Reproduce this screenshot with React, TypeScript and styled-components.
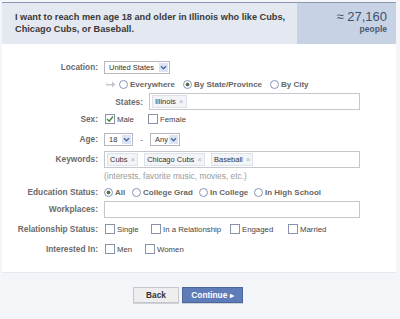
import styled, { createGlobalStyle } from "styled-components";

const GlobalStyle = createGlobalStyle`
  html, body {
    margin: 0;
    padding: 0;
    background: #f4f5f8;
  }
  body {
    font-family: "Liberation Sans", Arial, sans-serif;
    color: #333;
  }
`;

const Chevron = () => (
  <ChevronBox>
    <svg width="9" height="9" viewBox="0 0 9 9">
      <path d="M2 3.2 L4.5 5.8 L7 3.2" stroke="#4a6aa8" strokeWidth="1.4" fill="none" />
    </svg>
  </ChevronBox>
);

const Check = () => (
  <svg width="8" height="8" viewBox="0 0 8 8">
    <path d="M1 4 L3.2 6.2 L7 1.5" stroke="#3f8a35" strokeWidth="1.4" fill="none" />
  </svg>
);

const App = () => {
  return (
    <>
      <GlobalStyle />
      <Page>
        <Panel>
          <Summary>
            <SummaryText>
              I want to reach men age 18 and older in Illinois who like Cubs,
              Chicago Cubs, or Baseball.
            </SummaryText>
            <Estimate>
              <Count>≈ 27,160</Count>
              <People>people</People>
            </Estimate>
          </Summary>
          <Form>
            <Row h={16}>
              <Label>Location:</Label>
              <Select w={66}>
                United States
                <Chevron />
              </Select>
            </Row>
            <Row h={18}>
              <Label />
              <Arrow>
                <svg width="10" height="8" viewBox="0 0 10 8">
                  <path d="M1 1 L1 4 L6 4 L6 1.5 L9.5 4.5 L6 7.5 L6 5.5 L0 5.5 Z" fill="#c3c6cd" />
                </svg>
              </Arrow>
              <RadioOption w={64} bold>
                <Radio />
                Everywhere
              </RadioOption>
              <RadioOption w={87} bold>
                <Radio on />
                By State/Province
              </RadioOption>
              <RadioOption bold>
                <Radio />
                By City
              </RadioOption>
            </Row>
            <Row h={17}>
              <Label w={141}>States:</Label>
              <TokenInput w={211}>
                <Token>Illinois<X>×</X></Token>
              </TokenInput>
            </Row>
            <Row h={18}>
              <Label>Sex:</Label>
              <CheckOption w={42}>
                <Box>
                  <Check />
                </Box>
                Male
              </CheckOption>
              <CheckOption>
                <Box />
                Female
              </CheckOption>
            </Row>
            <Row h={22}>
              <Label>Age:</Label>
              <Select w={29}>
                18
                <Chevron />
              </Select>
              <Dash>-</Dash>
              <Select w={30}>
                Any
                <Chevron />
              </Select>
            </Row>
            <Row h={18}>
              <Label>Keywords:</Label>
              <TokenInput w={256}>
                <Token>Cubs<X>×</X></Token>
                <Token>Chicago Cubs<X>×</X></Token>
                <Token>Baseball<X>×</X></Token>
              </TokenInput>
            </Row>
            <Row h={16}>
              <Label />
              <Hint>(interests, favorite music, movies, etc.)</Hint>
            </Row>
            <Row h={16}>
              <Label>Education Status:</Label>
              <RadioOption w={28} bold>
                <Radio on />
                All
              </RadioOption>
              <RadioOption w={67} bold>
                <Radio />
                College Grad
              </RadioOption>
              <RadioOption w={55} bold>
                <Radio />
                In College
              </RadioOption>
              <RadioOption bold>
                <Radio />
                In High School
              </RadioOption>
            </Row>
            <Row h={18}>
              <Label>Workplaces:</Label>
              <TokenInput w={256} />
            </Row>
            <Row h={22}>
              <Label>Relationship Status:</Label>
              <CheckOption w={45}>
                <Box />
                Single
              </CheckOption>
              <CheckOption w={78}>
                <Box />
                In a Relationship
              </CheckOption>
              <CheckOption w={57}>
                <Box />
                Engaged
              </CheckOption>
              <CheckOption>
                <Box />
                Married
              </CheckOption>
            </Row>
            <Row h={18}>
              <Label>Interested In:</Label>
              <CheckOption w={39}>
                <Box />
                Men
              </CheckOption>
              <CheckOption>
                <Box />
                Women
              </CheckOption>
            </Row>
          </Form>
          <Actions>
            <Button w={46}>Back</Button>
            <Button w={61} primary>
              Continue ▸
            </Button>
          </Actions>
        </Panel>
      </Page>
    </>
  );
};

export default App;

const Page = styled.div`
  width: 400px;
  height: 319px;
  background: #f4f5f8;
  padding: 2px 0 0 2px;
  box-sizing: border-box;
`;

const Panel = styled.div`
  width: 394px;
`;

const Summary = styled.div`
  display: flex;
  height: 41px;
  border-top: 1px solid #8d98b0;
  background: #e4e8f0;
`;

const SummaryText = styled.div`
  flex: 1;
  padding: 8px 0 0 13px;
  font-size: 9.2px;
  font-weight: bold;
  line-height: 12px;
  color: #3a3a3a;
`;

const Estimate = styled.div`
  width: 99px;
  background: #c8d2e5;
  padding: 6px 9px 0 0;
  box-sizing: border-box;
  text-align: right;
  color: #44516d;
`;

const Count = styled.div`
  font-size: 13px;
  line-height: 15px;
`;

const People = styled.div`
  font-size: 8.5px;
  line-height: 10px;
  font-weight: bold;
  color: #4d5a73;
`;

const Form = styled.div`
  background: #fff;
  padding: 15px 0 14px;
  border-bottom: 1px solid #e6e8ee;
`;

const Row = styled.div<{ h: number }>`
  display: flex;
  align-items: center;
  height: ${(p) => p.h}px;
`;

const Label = styled.div<{ w?: number }>`
  width: ${(p) => p.w ?? 96}px;
  flex-shrink: 0;
  margin-right: 6px;
  text-align: right;
  font-size: 8.3px;
  font-weight: bold;
  color: #6b6b6b;
  white-space: nowrap;
`;

const Select = styled.div<{ w: number }>`
  display: flex;
  align-items: center;
  justify-content: space-between;
  width: ${(p) => p.w}px;
  height: 13px;
  box-sizing: border-box;
  border: 1px solid #b5b8c0;
  padding: 0 1px 0 4px;
  font-size: 7.5px;
  color: #333;
  background: #fff;
`;

const ChevronBox = styled.span`
  display: flex;
  width: 9px;
  height: 9px;
  background: #dce4f3;
`;

const Dash = styled.span`
  width: 17px;
  text-align: center;
  font-size: 8px;
  color: #555;
`;

const Arrow = styled.span`
  display: flex;
  width: 13px;
  margin-left: 2px;
`;

const RadioOption = styled.span<{ w?: number; bold?: boolean }>`
  display: flex;
  align-items: center;
  width: ${(p) => (p.w ? `${p.w}px` : "auto")};
  flex-shrink: 0;
  font-size: 8px;
  font-weight: ${(p) => (p.bold ? "bold" : "normal")};
  color: #666;
  white-space: nowrap;
`;

const Radio = styled.span<{ on?: boolean }>`
  width: 7px;
  height: 7px;
  border: 1px solid #8596ba;
  border-radius: 50%;
  background: ${(p) =>
    p.on ? "radial-gradient(circle, #5f6f4c 0 1.8px, #fff 2.2px)" : "#fff"};
  margin-right: 2px;
  flex-shrink: 0;
`;

const CheckOption = styled.span<{ w?: number }>`
  display: flex;
  align-items: center;
  width: ${(p) => (p.w ? `${p.w}px` : "auto")};
  flex-shrink: 0;
  margin-left: 1px;
  font-size: 7.8px;
  color: #444;
  white-space: nowrap;
`;

const Box = styled.span`
  display: flex;
  width: 8px;
  height: 8px;
  border: 1px solid #8893aa;
  margin-right: 2px;
  flex-shrink: 0;
  background: #fff;
`;

const TokenInput = styled.div<{ w: number }>`
  display: flex;
  align-items: center;
  gap: 6px;
  width: ${(p) => p.w}px;
  height: 17px;
  box-sizing: border-box;
  border: 1px solid #c4c7ce;
  padding: 0 2px;
  background: #fff;
`;

const Token = styled.span`
  display: flex;
  align-items: center;
  height: 11px;
  padding: 0 2px 0 2px;
  border: 1px solid #dde1ea;
  background: #f3f4f8;
  font-size: 7.5px;
  color: #333;
  white-space: nowrap;
`;

const X = styled.span`
  margin-left: 3px;
  font-size: 8px;
  color: #a8b0c4;
`;

const Hint = styled.span`
  font-size: 8.4px;
  color: #9a9a9a;
`;

const Actions = styled.div`
  display: flex;
  gap: 3px;
  padding: 14px 0 0 131px;
`;

const Button = styled.button<{ primary?: boolean; w: number }>`
  width: ${(p) => p.w}px;
  height: 16px;
  padding: 0;
  box-sizing: border-box;
  border: 1px solid ${(p) => (p.primary ? "#4a67a0" : "#c5c7cc")};
  background: ${(p) => (p.primary ? "#5d7cb8" : "#eeeeee")};
  color: ${(p) => (p.primary ? "#fff" : "#333")};
  font-family: "Liberation Sans", Arial, sans-serif;
  font-size: 8.3px;
  font-weight: bold;
  line-height: 14px;
  box-shadow: 0 1px 0 #d0d2d7;
`;
